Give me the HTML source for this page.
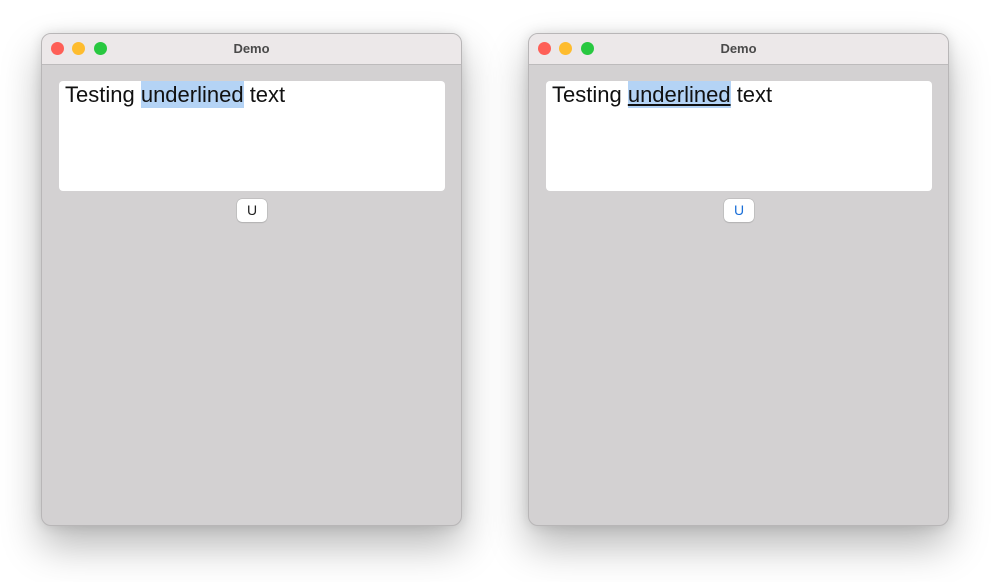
<!DOCTYPE html><html><head><style>
body{margin:0;width:1000px;height:582px;background:#fff;position:relative;font-family:"Liberation Sans",sans-serif;overflow:hidden}
.win{position:absolute;top:33px;width:421px;height:493px;background:#d3d1d2;border-radius:10px;border:1px solid #b8b6b7;box-sizing:border-box;box-shadow:0 20px 40px rgba(0,0,0,.28),0 0 12px rgba(0,0,0,.12);overflow:hidden}
.tb{height:30px;background:#ece8e9;border-bottom:1px solid #bdbbbc;position:relative}
.tb .t{position:absolute;width:100%;text-align:center;top:7px;font-size:13px;font-weight:bold;color:#4a4a4a}
.d{position:absolute;top:8px;width:13px;height:13px;border-radius:50%}
.ta{position:absolute;left:17px;top:47px;width:386px;height:110px;background:#fff;border-radius:4px}
.tx{position:absolute;left:6px;top:1px;font-size:22px;color:#111;white-space:nowrap}
.hl{background:#b4d3f5;padding:1px 0}
.btn{position:absolute;left:195px;top:165px;width:30px;height:23px;background:#fff;border-radius:5px;box-shadow:0 0 0 .5px #b0b0b0,0 1px 1px rgba(0,0,0,.15);text-align:center;line-height:23px;font-size:14px;color:#222}
</style></head><body>
<div class="win" style="left:41px"><div class="tb"><div class="d" style="left:9px;background:#fe5f57"></div><div class="d" style="left:30px;background:#febc2e"></div><div class="d" style="left:52px;background:#28c840"></div><div class="t">Demo</div></div>
<div class="ta"><div class="tx">Testing <span class="hl">underlined</span> text</div></div><div class="btn">U</div></div>
<div class="win" style="left:528px"><div class="tb"><div class="d" style="left:9px;background:#fe5f57"></div><div class="d" style="left:30px;background:#febc2e"></div><div class="d" style="left:52px;background:#28c840"></div><div class="t">Demo</div></div>
<div class="ta"><div class="tx">Testing <span class="hl" style="text-decoration:underline">underlined</span> text</div></div><div class="btn" style="color:#1a6fd8">U</div></div>
</body></html>
